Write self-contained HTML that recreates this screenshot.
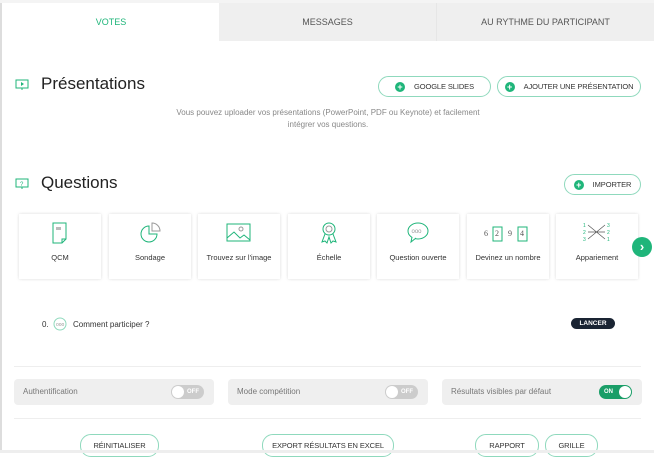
<!DOCTYPE html>
<html><head><meta charset="utf-8"><style>
*{box-sizing:border-box;margin:0;padding:0}
body{width:654px;height:453px;overflow:hidden;background:#fff;font-family:"Liberation Sans",sans-serif;color:#444;position:relative}
.abs{position:absolute}
.tab{position:absolute;top:3px;height:38px;font-size:9px;display:flex;align-items:center;justify-content:center;color:#555}
.btn{position:absolute;height:21px;border:1px solid #8fd9bd;border-radius:11px;font-size:7.5px;color:#333;display:flex;align-items:center;justify-content:center;background:#fff;letter-spacing:-.1px}
.plus{width:10px;height:10px;border-radius:50%;background:#1fb57a;color:#fff;font-size:9px;line-height:10px;text-align:center;margin-right:9px;font-weight:bold}
.card{position:absolute;top:214px;width:82px;height:65px;background:#fff;box-shadow:0 0 3px rgba(0,0,0,.15);font-size:7.5px;color:#333;text-align:center}
.card span{position:absolute;left:0;right:0;top:39px}
.card svg{position:absolute;left:29px;top:7px}
.box{position:absolute;top:379px;height:26px;width:200px;background:#efefef;border-radius:4px;font-size:8px;color:#777;padding:8px 9px}
.tg{position:absolute;right:10px;top:6px;width:33px;height:14px;border-radius:7px;background:#ccc;font-size:6px;color:#fff;font-weight:bold}
.tg i{position:absolute;top:1px;width:12px;height:12px;border-radius:50%;background:#fff}
.tg b{position:absolute;top:4px}
h2{position:absolute;font-weight:normal;font-size:17px;color:#222}
</style></head><body>
<div class="abs" style="left:0;top:0;width:2px;height:453px;background:#ddd"></div>
<div class="abs" style="left:0;top:0;width:654px;height:3px;background:#f4f4f4"></div>
<div class="tab" style="left:3px;width:216px;background:#fff;color:#1fb57a">VOTES</div>
<div class="tab" style="left:219px;width:217px;background:#efefef">MESSAGES</div>
<div class="tab" style="left:436px;width:218px;background:#efefef;border-left:1px solid #e6e6e6">AU RYTHME DU PARTICIPANT</div>

<svg class="abs" style="left:15px;top:79px" width="14" height="12"><rect x="1" y="1" width="12" height="8" fill="none" stroke="#1fb57a"/><path d="M6 3l3 2-3 2z" fill="#1fb57a"/><path d="M7 9v2" stroke="#1fb57a"/></svg>
<h2 style="left:41px;top:74px">Présentations</h2>
<div class="btn" style="left:378px;top:76px;width:113px"><div class="plus">+</div>GOOGLE SLIDES</div>
<div class="btn" style="left:497px;top:76px;width:144px"><div class="plus">+</div>AJOUTER UNE PRÉSENTATION</div>
<div class="abs" style="left:160px;top:107px;width:336px;text-align:center;font-size:8px;line-height:12px;color:#888">Vous pouvez uploader vos présentations (PowerPoint, PDF ou Keynote) et facilement<br>intégrer vos questions.</div>

<svg class="abs" style="left:15px;top:178px" width="14" height="12"><rect x="1" y="1" width="12" height="8" fill="none" stroke="#1fb57a"/><text x="5" y="8" font-size="6" fill="#1fb57a">?</text><path d="M7 9v2" stroke="#1fb57a"/></svg>
<h2 style="left:41px;top:173px">Questions</h2>
<div class="btn" style="left:564px;top:174px;width:77px"><div class="plus">+</div>IMPORTER</div>

<div class="card" style="left:19px"><svg width="24" height="24"><path d="M5 2h13v16l-4 4H5z M14 22v-4h4" fill="none" stroke="#1fb57a"/><rect x="8" y="6" width="5" height="3" fill="#bbb"/></svg><span>QCM</span></div>
<div class="card" style="left:109px"><svg width="24" height="24"><path d="M11 5a8 8 0 1 0 8 8h-8z" fill="none" stroke="#1fb57a"/><path d="M14 2v8h8a8 8 0 0 0-8-8z" fill="none" stroke="#999"/></svg><span>Sondage</span></div>
<div class="card" style="left:198px"><svg width="26" height="24" style="left:28px"><rect x="1" y="3" width="23" height="17" fill="none" stroke="#1fb57a"/><path d="M1 17l7-6 6 6 4-3 6 5" fill="none" stroke="#1fb57a"/><circle cx="15" cy="8" r="2" fill="none" stroke="#999"/></svg><span>Trouvez sur l'image</span></div>
<div class="card" style="left:288px"><svg width="24" height="24"><circle cx="12" cy="8" r="6" fill="none" stroke="#1fb57a"/><circle cx="12" cy="8" r="3" fill="none" stroke="#999"/><path d="M8 13l-3 8 3-1 2 2 2-6 2 6 2-2 3 1-3-8" fill="none" stroke="#1fb57a"/></svg><span>Échelle</span></div>
<div class="card" style="left:377px"><svg width="24" height="24"><ellipse cx="12" cy="10" rx="10" ry="8" fill="none" stroke="#1fb57a"/><path d="M6 16l-1 5 5-4" fill="#fff" stroke="#1fb57a"/><text x="5.5" y="12" font-size="6" fill="#999">ooo</text></svg><span>Question ouverte</span></div>
<div class="card" style="left:467px"><svg width="60" height="24" style="left:14px"><text x="3" y="15" font-size="8" font-family="Liberation Serif" fill="#555">6</text><rect x="12" y="6" width="9" height="14" fill="none" stroke="#1fb57a"/><text x="14" y="15" font-size="8" font-family="Liberation Serif" fill="#555">2</text><text x="27" y="15" font-size="8" font-family="Liberation Serif" fill="#555">9</text><rect x="37" y="6" width="9" height="14" fill="none" stroke="#1fb57a"/><text x="39" y="15" font-size="8" font-family="Liberation Serif" fill="#555">4</text></svg><span>Devinez un nombre</span></div>
<div class="card" style="left:556px"><svg width="30" height="24" style="left:26px"><g font-size="5" fill="#1fb57a"><text x="1" y="6">1</text><text x="1" y="13">2</text><text x="1" y="20">3</text><text x="25" y="6">3</text><text x="25" y="13">2</text><text x="25" y="20">1</text></g><path d="M6 4l17 14M6 18l17-14M6 11h17" stroke="#555" stroke-width=".7"/></svg><span>Appariement</span></div>
<div class="abs" style="left:632px;top:237px;width:20px;height:20px;border-radius:50%;background:#1fb57a;color:#fff;font-size:13px;font-weight:bold;text-align:center;line-height:19px">›</div>

<div class="abs" style="left:42px;top:320px;font-size:8px;color:#333">0.</div>
<svg class="abs" style="left:53px;top:317px" width="14" height="14"><circle cx="7" cy="7" r="6" fill="none" stroke="#8fd9bd"/><text x="3" y="9" font-size="5" fill="#999">ooo</text></svg>
<div class="abs" style="left:73px;top:320px;font-size:8px;color:#333">Comment participer ?</div>
<div class="abs" style="left:571px;top:318px;width:44px;height:11px;border-radius:6px;background:#1a2433;color:#fff;font-size:6.5px;font-weight:bold;text-align:center;line-height:11px">LANCER</div>

<div class="abs" style="left:14px;top:366px;width:627px;height:1px;background:#eee"></div>
<div class="box" style="left:14px">Authentification<div class="tg"><i style="left:1px"></i><b style="right:5px">OFF</b></div></div>
<div class="box" style="left:228px">Mode compétition<div class="tg"><i style="left:1px"></i><b style="right:5px">OFF</b></div></div>
<div class="box" style="left:442px">Résultats visibles par défaut<div class="tg" style="background:#1a9e68"><b style="left:5px">ON</b><i style="right:1px"></i></div></div>
<div class="abs" style="left:14px;top:418px;width:627px;height:1px;background:#eee"></div>

<div class="btn" style="left:80px;top:434px;width:79px;height:23px">RÉINITIALISER</div>
<div class="btn" style="left:262px;top:434px;width:132px;height:23px">EXPORT RÉSULTATS EN EXCEL</div>
<div class="btn" style="left:475px;top:434px;width:64px;height:23px">RAPPORT</div>
<div class="btn" style="left:545px;top:434px;width:53px;height:23px">GRILLE</div>
<div class="abs" style="left:0;top:450px;width:654px;height:3px;background:#eee"></div>
</body></html>
